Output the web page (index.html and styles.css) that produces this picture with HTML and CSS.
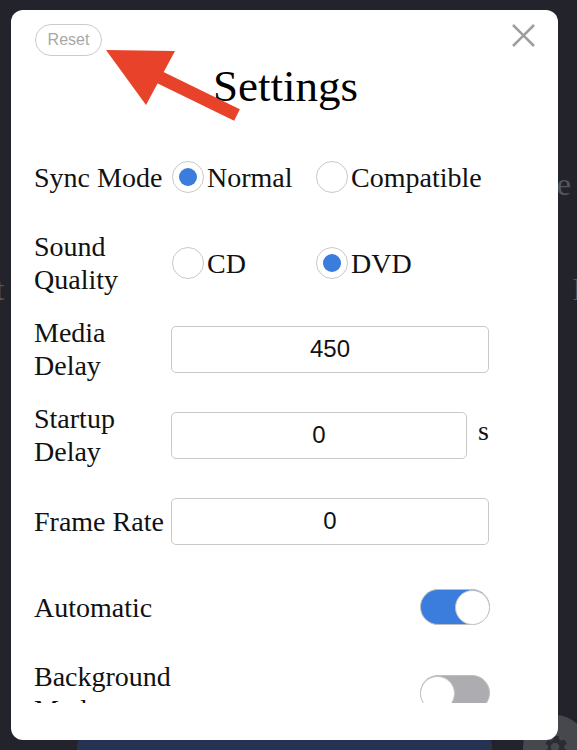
FILE: index.html
```html
<!DOCTYPE html>
<html lang="en">
<head>
    <meta charset="UTF-8">
    <meta name="viewport" content="width=device-width, initial-scale=1.0">
    <title>Settings</title>
    <link rel="stylesheet" href="styles.css">
</head>
<body>
    <div class="page">
        <div class="page-line right">Sync Mode</div>
        <div class="page-line split">
            <span class="cut-left">Start</span>
            <span class="cut-right">In</span>
        </div>
        <div class="page-footer">
            <button class="update-btn">Check for updates</button>
            <div class="gear-btn">
                <svg width="30" height="30" viewBox="0 0 24 24">
                    <path fill="#2b2b32" d="M19.4 13a7.6 7.6 0 0 0 0-2l2.1-1.6-2-3.5-2.5 1a7.3 7.3 0 0 0-1.7-1L15 3.2h-4l-.4 2.7a7.3 7.3 0 0 0-1.7 1l-2.5-1-2 3.5L6.6 11a7.6 7.6 0 0 0 0 2l-2.1 1.6 2 3.5 2.5-1a7.3 7.3 0 0 0 1.7 1l.4 2.7h4l.4-2.7a7.3 7.3 0 0 0 1.7-1l2.5 1 2-3.5zM12 15.5a3.5 3.5 0 1 1 0-7 3.5 3.5 0 0 1 0 7z"/>
                </svg>
            </div>
        </div>
    </div>

    <div class="modal">
        <div class="modal-head">
            <button class="reset-btn">Reset</button>
            <button class="close-btn" aria-label="Close">
                <svg width="25" height="25" viewBox="0 0 25 25">
                    <path d="M2 2 L23 23 M23 2 L2 23" stroke="#9d9d9d" stroke-width="2.6" fill="none"/>
                </svg>
            </button>
        </div>
        <h1 class="title">Settings</h1>

        <div class="settings">
            <div class="row">
                <div class="label">Sync Mode</div>
                <div class="radios">
                    <label class="option"><span class="radio checked"></span>Normal</label>
                    <label class="option"><span class="radio"></span>Compatible</label>
                </div>
            </div>
            <div class="row">
                <div class="label">Sound Quality</div>
                <div class="radios">
                    <label class="option"><span class="radio"></span>CD</label>
                    <label class="option"><span class="radio checked"></span>DVD</label>
                </div>
            </div>
            <div class="row">
                <div class="label">Media Delay</div>
                <div class="field"><input class="num" type="text" value="450"></div>
            </div>
            <div class="row">
                <div class="label">Startup Delay</div>
                <div class="field"><input class="num" type="text" value="0"><span class="unit">s</span></div>
            </div>
            <div class="row">
                <div class="label">Frame Rate</div>
                <div class="field"><input class="num" type="text" value="0"></div>
            </div>
            <div class="row">
                <div class="label">Automatic</div>
                <div class="switch-cell"><span class="switch on"><span class="knob"></span></span></div>
            </div>
            <div class="row">
                <div class="label">Background Mode</div>
                <div class="switch-cell"><span class="switch"><span class="knob"></span></span></div>
            </div>
        </div>

        <svg class="arrow" width="547" height="130" viewBox="0 0 547 130">
            <polygon points="95,40 164,41 135,95" fill="#e8432a"/>
            <line x1="144" y1="65" x2="226" y2="105" stroke="#e8432a" stroke-width="13"/>
        </svg>
    </div>
</body>
</html>
```

FILE: styles.css
```css
body {
    margin: 0;
    background-color: #22232b;
    font-family: 'Liberation Serif', 'Times New Roman', serif;
}
.page {
    height: 750px;
    overflow: hidden;
    box-sizing: border-box;
    padding-top: 164px;
    display: flex;
    flex-direction: column;
    color: #55565e;
    font-size: 32px;
    line-height: 40px;
}
.page-line.right {
    text-align: right;
    padding-right: 6px;
}
.page-line.split {
    margin-top: 65px;
    display: flex;
    justify-content: space-between;
}
.cut-left {
    margin-left: -56px;
}
.cut-right {
    margin-right: -22px;
}
.page-footer {
    margin-top: auto;
    height: 35px;
    display: flex;
    align-items: flex-start;
    padding-left: 77px;
    gap: 31px;
}
.update-btn {
    width: 415px;
    height: 60px;
    margin-top: 19px;
    border: none;
    border-radius: 12px;
    background-color: #253252;
    color: #6c7184;
    font-family: 'Liberation Sans', Arial, sans-serif;
    font-size: 29px;
    font-weight: bold;
    padding: 0;
    flex-shrink: 0;
}
.gear-btn {
    width: 64px;
    height: 64px;
    border-radius: 50%;
    background-color: #47474e;
    display: flex;
    align-items: center;
    justify-content: center;
    flex-shrink: 0;
}

.modal {
    position: fixed;
    top: 10px;
    left: 11px;
    width: 547px;
    height: 730px;
    box-sizing: border-box;
    background-color: #fff;
    border-radius: 12px;
    padding: 14px 22px 37px 24px;
    display: flex;
    flex-direction: column;
}
.modal-head {
    display: flex;
    justify-content: space-between;
    align-items: flex-start;
    height: 32px;
}
.reset-btn {
    width: 67px;
    height: 32px;
    border: 1px solid #cbcbcb;
    border-radius: 16px;
    background: #fff;
    color: #a8a8a8;
    font-family: 'Liberation Sans', Arial, sans-serif;
    font-size: 16px;
    padding: 0;
}
.close-btn {
    margin-top: -1px;
    border: none;
    background: none;
    padding: 0;
    width: 25px;
    height: 25px;
}
.close-btn svg {
    display: block;
}
.title {
    margin: 4px 0 0;
    text-align: center;
    font-size: 45px;
    font-weight: normal;
    line-height: 52px;
    color: #000;
}
.settings {
    flex: 1;
    overflow: hidden;
    margin-left: -1px;
    padding-top: 22px;
}
.row {
    height: 86px;
    display: grid;
    grid-template-columns: 137px 318px;
    align-items: center;
    font-size: 28px;
    line-height: 33px;
    color: #111;
}
.radios {
    display: grid;
    grid-template-columns: 144px 144px;
    padding-left: 1px;
}
.option {
    display: flex;
    align-items: center;
    gap: 3px;
}
.radio {
    width: 32px;
    height: 32px;
    box-sizing: border-box;
    border: 1px solid #c9c9c9;
    border-radius: 50%;
    display: flex;
    align-items: center;
    justify-content: center;
    flex-shrink: 0;
}
.radio.checked::after {
    content: '';
    width: 18px;
    height: 18px;
    border-radius: 50%;
    background-color: #3b7ddd;
}
.field {
    display: flex;
    align-items: center;
}
.num {
    flex: 1;
    min-width: 0;
    height: 47px;
    box-sizing: border-box;
    border: 1px solid #c9c9c9;
    border-radius: 5px;
    text-align: center;
    font-family: 'Liberation Sans', Arial, sans-serif;
    font-size: 24px;
    color: #111;
    padding: 0;
}
.unit {
    margin-left: 11px;
    margin-bottom: 10px;
}
.switch-cell {
    display: flex;
    justify-content: flex-end;
    margin-right: -1px;
}
.switch {
    width: 70px;
    height: 36px;
    box-sizing: border-box;
    border: 1px solid #bdbdbd;
    border-radius: 18px;
    background-color: #adacb0;
    display: flex;
    align-items: center;
}
.switch.on {
    background-color: #3b7ddd;
    justify-content: flex-end;
}
.knob {
    width: 35px;
    height: 35px;
    box-sizing: border-box;
    border-radius: 50%;
    background-color: #fff;
    border: 1px solid #c4c4c4;
    margin: -1px;
}
.arrow {
    position: absolute;
    top: 0;
    left: 0;
    pointer-events: none;
}
```
